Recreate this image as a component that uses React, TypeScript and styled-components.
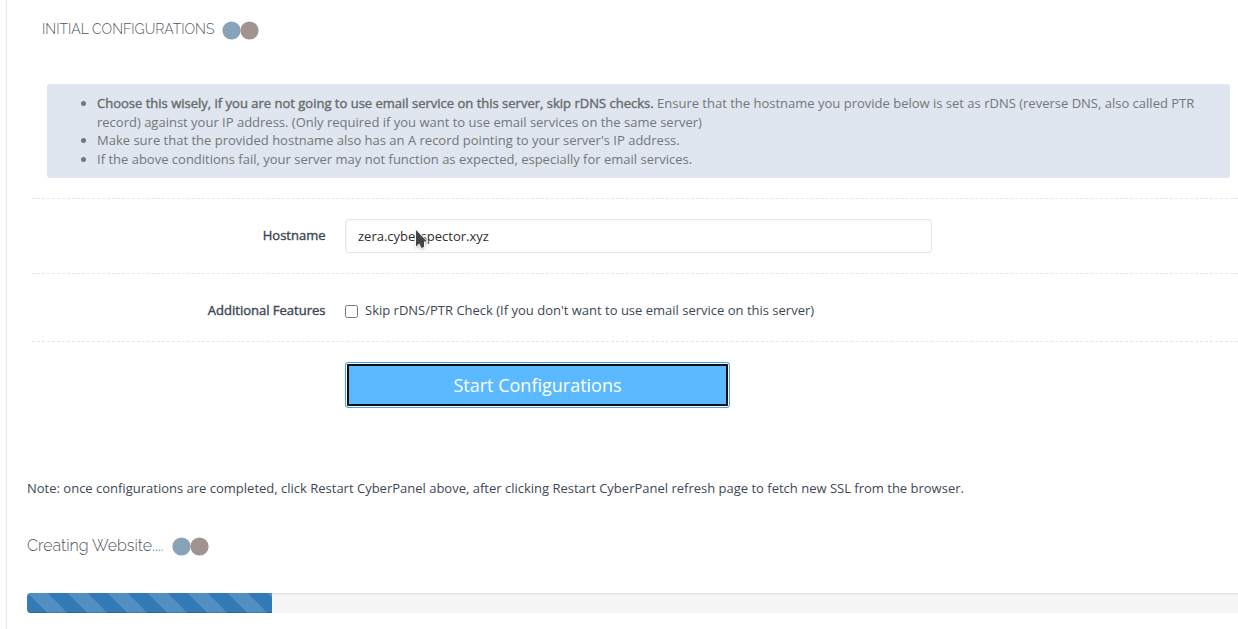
import React from "react";
import styled, { createGlobalStyle } from "styled-components";

const GlobalStyle = createGlobalStyle`
  *, *::before, *::after { box-sizing: border-box; }
  body {
    margin: 0;
    overflow: hidden;
    background: #fff;
    color: #3e4855;
    font: 13px/18.57px "Open Sans", sans-serif;
  }
`;

const Page = styled.main`
  height: 629px;
  margin-left: 6px;
  padding-left: 20px;
  border-left: 1px solid #dfe8f1;
  overflow: hidden;
`;

const Heading = styled.h3<{ $upper?: boolean }>`
  display: flex;
  align-items: center;
  height: 20px;
  margin: ${(p) => (p.$upper ? "20px 0 0 15px" : "38px 0 0")};
  color: #4f565f;
  font: 300 ${(p) => (p.$upper ? "14px" : "16px")}/20px Raleway, Lato, sans-serif;
`;

const HeadingText = styled.span<{ $width: number; $lift?: number }>`
  width: ${(p) => p.$width}px;
  margin-bottom: ${(p) => p.$lift ?? 0}px;
  white-space: nowrap;
`;

const Loader = styled.svg`
  display: block;
  width: 38px;
  height: 20px;
`;

const Notice = styled.div`
  width: 1183px;
  height: 94px;
  margin: 44px 0 20px 20px;
  padding: 10px 15px;
  border-radius: 3px;
  background: #dfe6ef;
  color: #73777a;
`;

const NoticeList = styled.ul`
  margin: 0;
  padding-left: 35px;
`;

const Strong = styled.strong`
  color: #686b6e;
  font-weight: 400;
  -webkit-text-stroke: 0.4px currentColor;
`;

const FormRow = styled.div<{ $height: number }>`
  display: flex;
  height: ${(p) => p.$height}px;
  margin-left: 5px;
  padding-top: 20px;
  border-top: 1px dashed #dfe8f1;
`;

const Label = styled.label`
  width: 293.5px;
  margin-right: 19.5px;
  padding-top: 7px;
  text-align: right;
  -webkit-text-stroke: 0.4px currentColor;
`;

const HostField = styled.div`
  position: relative;
  width: 587px;
  height: 34px;
`;

const TextInput = styled.input`
  display: block;
  width: 100%;
  height: 34px;
  padding: 6px 12px;
  border: 1px solid #dfe8f1;
  border-radius: 3px;
  outline: none;
  box-shadow: inset 1px 1px 3px #f6f6f6;
  background: #fff;
  color: #2b2f33;
  font: inherit;
`;

const Cursor = styled.svg`
  position: absolute;
  left: 67px;
  top: 8px;
  width: 18px;
  height: 26px;
  filter: drop-shadow(0 1px 1px rgba(0, 0, 0, 0.25));
`;

const CheckLabel = styled.label`
  display: flex;
  align-items: center;
  height: 18px;
  margin-top: 7px;
`;

const Checkbox = styled.input`
  width: 13px;
  height: 13px;
  margin: 2px 7px 0 0;
`;

const StartButton = styled.button`
  width: 385px;
  height: 46px;
  margin-left: 313px;
  padding: 0;
  border: 1px solid #3da8f5;
  border-radius: 3px;
  background: #5bbaff;
  box-shadow: inset 0 0 0 1px #fff;
  color: #fff;
  font: 18px/44px "Open Sans", sans-serif;
  outline: 2px solid #101010;
  outline-offset: -4px;
`;

const Note = styled.p`
  margin: 71px 0 0;
`;

const Track = styled.div`
  width: 1225px;
  height: 20px;
  margin-top: 37px;
  overflow: hidden;
  border-radius: 4px;
  background: #f5f5f5;
  box-shadow: inset 0 1px 2px rgba(0, 0, 0, 0.1);
`;

const Fill = styled.div`
  height: 100%;
  background: linear-gradient(
      45deg,
      rgba(255, 255, 255, 0.15) 25%,
      transparent 25%,
      transparent 50%,
      rgba(255, 255, 255, 0.15) 50%,
      rgba(255, 255, 255, 0.15) 75%,
      transparent 75%
    ) 1px 0 / 40px 40px #337ab7;
  box-shadow: inset 0 -1px 0 rgba(0, 0, 0, 0.15);
`;

function Dots() {
  return (
    <Loader viewBox="0 0 38 20" aria-hidden="true">
      <circle cx="9.5" cy="10.5" r="9.1" fill="#88a2b7" />
      <circle cx="27.5" cy="10.5" r="9.1" fill="#a29393" />
    </Loader>
  );
}

export default function App() {
  return (
    <>
      <GlobalStyle />
      <Page>
        <Heading $upper>
          <HeadingText $width={180} $lift={2}>INITIAL CONFIGURATIONS</HeadingText>
          <Dots />
        </Heading>
        <Notice>
          <NoticeList>
            <li>
              <Strong>
                Choose this wisely, if you are not going to use email service on this server, skip rDNS checks.
              </Strong>{" "}
              Ensure that the hostname you provide below is set as rDNS (reverse DNS, also called PTR record)
              against your IP address. (Only required if you want to use email services on the same server)
            </li>
            <li>Make sure that the provided hostname also has an A record pointing to your server's IP address.</li>
            <li>If the above conditions fail, your server may not function as expected, especially for email services.</li>
          </NoticeList>
        </Notice>
        <FormRow $height={75}>
          <Label htmlFor="hostname">Hostname</Label>
          <HostField>
            <TextInput id="hostname" defaultValue="zera.cyberspector.xyz" />
            <Cursor viewBox="0 0 18 26" aria-hidden="true">
              <path d="M4 3V19.5L7.2 16.5L9.5 21L12 20V14.5H15Z" fill="#454545" stroke="#fff" strokeWidth="1.6" paintOrder="stroke" />
            </Cursor>
          </HostField>
        </FormRow>
        <FormRow $height={68}>
          <Label as="span">Additional Features</Label>
          <CheckLabel>
            <Checkbox type="checkbox" />
            Skip rDNS/PTR Check (If you don't want to use email service on this server)
          </CheckLabel>
        </FormRow>
        <FormRow $height={67}>
          <StartButton type="button">Start Configurations</StartButton>
        </FormRow>
        <Note>
          Note: once configurations are completed, click Restart CyberPanel above, after clicking Restart CyberPanel
          refresh page to fetch new SSL from the browser.
        </Note>
        <Heading>
          <HeadingText $width={145}>Creating Website....</HeadingText>
          <Dots />
        </Heading>
        <Track>
          <Fill style={{ width: "20%" }} />
        </Track>
      </Page>
    </>
  );
}
